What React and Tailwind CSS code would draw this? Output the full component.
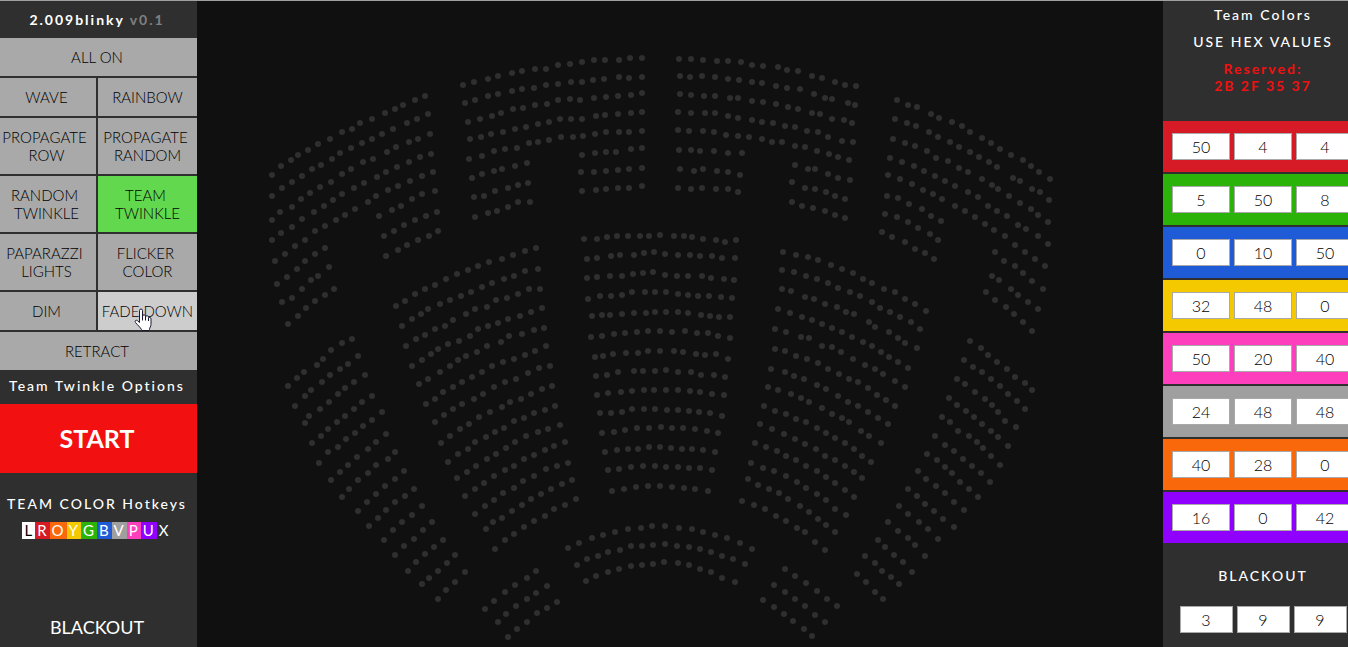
import React from "react";

// Each block of seats has an origin and a number of survey units per map unit.
const BLOCKS = [
  {
    origin: [255, 45],
    units: [3, 3],
    rows: [
      "51,390 78,363 108,345 129,330 159,315 189,297 225,282 261,261 291,252 315,234 351,222 390,204 420,192 444,180 480,165 510,153",
      "51,453 81,429 111,411 141,393 171,372 198,360 231,342 255,324 288,309 321,294 351,282 381,267 414,252 456,234 486,222 519,207",
      "51,525 75,501 111,486 138,462 165,444 195,426 228,411 261,387 288,372 324,351 354,342 396,321 423,306 462,291 489,282 525,267",
      "51,585 78,564 111,546 141,522 177,501 207,483 234,465 261,447 297,429 327,414 366,396 393,381 426,366 462,351 495,336 528,327",
      "60,648 90,627 120,603 150,585 180,558 210,543 243,525 270,510 300,492 339,471 363,453 399,435 429,423 465,408 501,393 534,381",
      "66,717 96,696 126,672 150,648 180,627 210,609 372,513 411,495 438,483 471,462 501,447 540,438",
      "81,771 111,759 141,732 168,705 189,693 222,666 387,573 417,558 447,540 480,525 513,513 546,501",
      "99,837 129,813 153,789 180,768 210,750 237,732 393,633 429,615 456,600 489,585 522,573 549,558",
    ],
  },
  {
    origin: [450, 45],
    units: [3, 3],
    rows: [
      "39,120 72,111 114,102 144,93 186,84 216,78 255,72 288,72 324,60 360,57 396,51 432,45 465,45 507,45 540,39 576,39",
      "45,174 75,165 114,153 144,147 186,138 216,132 252,129 288,120 324,117 363,111 396,111 429,105 462,102 507,96 537,99 576,96",
      "54,231 90,222 126,213 153,204 189,192 219,189 255,180 291,177 324,165 360,162 390,165 432,159 468,156 504,153 543,150 576,144",
      "60,282 93,276 123,267 159,261 195,252 228,246 264,237 297,231 330,222 363,222 396,222 438,213 465,210 504,207 543,204 576,201",
      "57,342 96,333 132,318 165,312 201,309 237,294 264,291 297,285 333,276 369,276 399,273 435,267 468,261 507,261 537,261 576,258",
      "66,399 96,387 132,378 156,372 195,363 231,354 396,330 435,324 468,321 498,321 543,312 576,309",
      "72,456 102,453 135,438 174,429 204,420 234,414 393,381 432,381 468,378 504,375 537,372 576,369",
      "75,516 114,504 141,498 174,486 204,471 240,471 396,438 438,435 468,432 504,429 537,429 576,423",
    ],
  },
  {
    origin: [660, 45],
    units: [3, 3],
    rows: [
      "57,42 93,42 129,45 171,48 204,48 243,51 276,60 309,63 354,66 381,75 414,78 456,93 486,99 525,111 555,120 588,123",
      "60,93 90,96 126,93 165,96 204,102 237,105 276,111 306,114 348,123 381,129 420,132 462,147 495,159 516,162 564,174 585,180",
      "60,147 93,150 132,153 165,153 210,159 234,159 276,168 309,171 348,177 384,186 414,192 456,204 480,207 516,222 552,225 576,234",
      "54,201 93,204 135,204 165,204 204,213 234,219 276,225 306,231 339,234 375,243 405,246 441,258 474,261 504,276 546,288 579,291",
      "54,255 87,258 129,258 162,261 198,270 234,273 267,276 306,282 336,291 366,291 405,303 435,306 471,318 507,327 534,336 567,345",
      "57,315 93,315 120,318 162,318 204,324 246,324 405,360 444,372 465,372 504,387 534,399 570,405",
      "60,372 102,378 129,372 171,378 204,381 240,390 396,411 435,429 465,432 498,441 525,453 555,462",
      "54,429 93,432 126,429 168,432 204,432 234,441 396,471 426,483 459,489 495,498 525,510 555,519",
    ],
  },
  {
    origin: [865, 80],
    units: [3, 3],
    rows: [
      "96,60 129,75 156,81 198,102 222,114 261,126 291,138 315,156 351,174 378,189 405,207 438,225 474,240 498,258 522,276 555,297",
      "90,117 126,129 153,138 192,156 219,171 255,186 282,201 315,216 342,231 372,246 396,261 444,294 465,303 501,327 525,336 552,360",
      "84,177 120,189 150,198 186,213 213,234 249,243 282,264 309,276 351,297 381,315 399,327 432,348 465,369 498,387 519,405 549,426",
      "75,234 111,246 147,258 177,273 210,288 240,303 270,318 309,336 339,351 369,378 396,393 426,408 459,435 483,447 519,468 549,492",
      "69,285 105,297 141,312 174,330 204,342 231,357 270,378 300,393 330,411 360,432 387,450 420,468 450,495 480,516 510,537 540,558",
      "66,348 99,354 132,372 171,387 198,408 228,423 390,516 417,543 450,558 474,579 501,603 534,627",
      "60,402 96,411 129,426 159,444 195,462 219,480 381,588 402,600 438,627 459,645 489,666 519,687",
      "51,456 81,471 120,486 150,507 180,519 207,537 363,636 390,660 423,681 447,702 474,726 501,753",
    ],
  },
  {
    origin: [380, 220],
    units: [3, 3],
    rows: [
      "48,258 75,243 105,222 135,207 165,195 198,177 231,162 264,150 294,138 327,126 366,117 399,105 435,93 468,84",
      "66,318 96,297 123,282 144,267 180,252 210,240 243,228 273,216 306,201 336,189 372,177 402,168 435,153 474,147",
      "78,378 108,357 135,345 165,327 195,318 219,300 258,282 285,267 321,261 348,240 381,234 414,222 447,207 480,207",
      "96,438 126,420 153,402 174,387 204,372 237,363 270,348 294,327 324,318 354,309 384,297 420,288 453,276 486,264",
      "117,492 144,477 180,456 210,438 234,420 258,408 291,396 321,378 363,366 387,348 426,342 462,330 492,324",
      "138,552 165,537 189,516 219,501 246,486 276,471 306,456 336,438 369,426 402,417 435,405 465,393 498,378",
      "165,606 192,585 219,567 246,552 282,537 309,522 342,501 375,486 408,477 444,459 477,444 510,438",
      "183,669 210,648 240,627 267,612 297,591 330,576 366,561 390,546 423,537 453,522 486,507 516,498",
      "204,726 234,702 264,687 285,666 318,651 345,636 372,624 402,603 432,594 462,579 495,570 525,558",
      "231,774 261,756 288,738 321,717 348,702 378,684 405,666 438,648 474,636 504,627 540,615",
      "255,828 285,807 312,789 342,768 375,750 402,738 432,717 462,705 495,690 522,678 555,666",
      "285,882 315,858 342,840 369,819 402,804 429,783 462,768 498,747 531,738 564,729",
      "318,927 339,906 366,894 396,873 426,855 453,837 483,822 513,807 546,792 576,780",
      "345,987 375,960 402,942 432,921 462,903 495,888 522,867 555,855 588,837",
    ],
  },
  {
    origin: [570, 220],
    units: [3, 3],
    rows: [
      "42,57 81,57 111,51 141,48 174,48 210,48 237,48 270,45 312,48 342,48 366,51 399,57 438,60 465,66 498,60",
      "51,117 81,114 123,108 150,105 192,105 222,99 252,96 285,102 324,105 360,105 390,108 426,108 456,114 495,114",
      "51,174 81,171 120,168 156,168 189,162 219,159 249,156 285,165 321,168 354,168 396,168 423,174 462,177 492,180",
      "54,237 90,228 123,228 156,225 186,216 225,216 255,216 288,216 324,222 354,225 384,228 417,228 453,231 486,234",
      "66,288 96,285 120,285 156,282 192,279 228,279 255,276 288,276 324,276 354,279 393,285 420,288 447,291 480,291",
      "63,351 96,348 132,342 165,339 201,336 234,333 270,333 306,336 345,333 381,339 414,339 444,348 480,354",
      "75,411 99,408 129,402 168,399 204,399 234,393 270,393 312,393 339,396 378,402 405,405 438,402 474,417",
      "78,468 111,465 144,456 192,453 219,453 255,453 288,450 324,456 363,456 393,465 432,465 465,471",
      "81,525 114,519 153,516 186,513 222,510 252,510 288,510 324,510 360,513 390,516 426,522 462,525",
      "90,579 123,579 156,576 186,567 222,567 255,567 291,570 324,570 357,573 387,576 420,579 456,588",
      "96,639 132,636 165,630 201,624 237,624 273,621 306,624 339,624 375,627 411,633 444,639",
      "105,696 141,690 174,687 204,687 237,681 270,681 303,684 336,687 366,687 399,690 435,696",
      "114,750 147,747 183,741 219,738 255,738 288,741 324,741 357,744 390,744 426,750",
      "126,813 162,807 198,801 234,798 270,798 306,801 342,804 375,807 414,813",
    ],
  },
  {
    origin: [735, 220],
    units: [3, 3],
    rows: [
      "144,96 183,105 219,111 249,120 288,135 321,147 354,159 384,177 411,189 447,207 480,216 510,237 540,252 573,273",
      "141,150 177,156 213,168 246,177 279,189 309,204 345,216 375,228 411,246 435,264 465,276 495,291 528,306 555,327",
      "141,207 168,213 210,231 237,237 270,252 306,261 333,276 357,282 402,306 420,321 462,336 489,354 510,369 546,384",
      "129,267 165,279 201,291 231,300 261,312 291,324 321,336 351,351 384,366 411,378 438,396 462,411 489,426 519,444",
      "120,327 153,336 198,351 222,354 261,378 291,381 318,396 354,417 390,435 420,447 444,462 480,483 510,501",
      "120,387 150,393 183,408 216,417 249,429 279,447 312,462 342,477 369,486 399,504 426,525 453,540 480,558",
      "108,447 150,456 177,468 207,477 246,495 273,507 309,528 339,546 369,558 399,576 429,594 459,612",
      "99,501 129,510 168,522 198,534 222,546 261,564 291,582 321,594 342,606 378,633 402,648 438,669",
      "87,558 120,573 153,582 183,597 213,606 246,624 273,639 300,654 330,669 357,687 381,708 408,726",
      "75,612 111,627 147,642 180,657 210,672 243,687 270,708 300,720 330,738 357,756 381,774",
      "60,669 93,681 126,693 153,708 183,720 213,738 246,753 273,771 300,789 330,810 357,831",
      "48,729 84,744 117,753 153,768 186,786 213,804 246,822 273,840 300,867 333,885",
      "39,777 69,795 102,807 132,819 159,837 195,858 222,876 249,897 273,915 300,936",
      "21,843 57,855 90,867 123,888 153,903 186,924 210,936 240,966 270,990",
    ],
  },
  {
    origin: [270, 325],
    units: [1.96, 3],
    rows: [
      "35,183 53,159 67,141 92,120 104,102 119,75 141,54 161,42",
      "49,243 68,213 80,195 102,171 117,150 137,132 153,117 173,93",
      "68,294 76,273 98,252 116,231 133,207 147,189 165,171 186,150",
      "82,354 100,333 114,312 131,291 147,273 165,252 180,231 200,213",
      "96,414 114,381 133,366 149,342 167,324 182,303 200,285 219,261",
      "119,465 137,441 153,420 170,396 192,372 208,351 227,327",
      "141,516 155,492 173,465 192,444 208,420 231,402 245,381",
      "173,558 190,531 208,507 225,483 245,462 263,438",
      "194,603 212,579 227,555 245,531 265,513 282,492",
      "223,645 241,615 259,591 278,570 298,543",
      "245,690 263,663 282,642 300,615 317,591",
      "270,738 286,711 304,687 321,666 339,645",
      "298,777 312,759 329,738 347,714 363,690",
      "329,822 345,796 363,771 382,741",
      "421,852 439,828 461,801 480,780 504,759 521,738",
      "447,891 463,867 482,843 504,822 521,804 543,783",
      "466,936 484,912 504,891 523,864 543,849 562,831",
      "584,669 606,654 631,639 653,630 676,621 702,612 727,609 749,603 774,603 802,609 827,612 849,621 872,630 896,639 921,654 945,672",
      "602,720 621,702 643,693 663,681 686,675 708,663 729,663 751,660 774,657 798,663 821,666 843,672 864,681 886,693 908,702 931,717",
      "619,768 639,753 663,741 684,732 708,723 729,720 751,717 772,711 800,714 821,720 843,732 864,741 886,759 911,771",
      "1009,732 1029,753 1050,774 1072,798 1092,822 1111,843",
      "988,780 1009,801 1029,822 1048,843 1068,870 1088,891",
      "966,825 988,846 1007,867 1025,888 1047,912 1062,933",
      "1372,48 1393,69 1407,90 1425,111 1444,132 1460,156 1480,174 1493,195",
      "1360,105 1378,126 1395,141 1413,162 1431,183 1446,207 1464,228 1480,252",
      "1346,162 1362,177 1382,201 1401,222 1415,240 1427,261 1441,288 1462,306",
      "1331,219 1346,240 1364,258 1380,276 1395,297 1413,318 1427,336 1446,363",
      "1317,276 1333,291 1348,318 1370,333 1386,351 1397,369 1413,393 1431,420",
      "1303,333 1323,360 1341,378 1358,402 1376,423 1393,444 1411,471",
      "1288,387 1307,405 1323,426 1337,444 1352,471 1370,492 1388,516",
      "1270,438 1286,462 1305,483 1323,504 1341,531 1360,555",
      "1250,492 1268,513 1284,537 1301,558 1319,582 1341,606",
      "1233,543 1250,567 1272,591 1290,612 1309,642",
      "1211,591 1231,618 1250,639 1264,660 1284,693",
      "1192,645 1205,666 1223,690 1241,711 1258,741",
      "1166,693 1186,714 1199,738 1217,756 1233,777",
      "1150,747 1168,771 1186,801 1201,822",
    ],
  },
];

const SEATS = BLOCKS.flatMap(({ origin, units, rows }) =>
  rows.flatMap((row) =>
    row.split(" ").map((pair) => {
      const [x, y] = pair.split(",").map(Number);
      return [
        Math.round(origin[0] + x / units[0]),
        Math.round(origin[1] + y / units[1]),
      ];
    })
  )
);

const MODES = [
  { lines: ["ALL ON"], wide: true },
  { lines: ["WAVE"] },
  { lines: ["RAINBOW"] },
  { lines: ["PROPAGATE", "ROW"] },
  { lines: ["PROPAGATE", "RANDOM"] },
  { lines: ["RANDOM", "TWINKLE"] },
  { lines: ["TEAM", "TWINKLE"], active: true },
  { lines: ["PAPARAZZI", "LIGHTS"] },
  { lines: ["FLICKER", "COLOR"] },
  { lines: ["DIM"] },
  { lines: ["FADE DOWN"], hovered: true },
  { lines: ["RETRACT"], wide: true },
];

const HOTKEYS = [
  ["L", "bg-white text-black"],
  ["R", "bg-[#d61b26]"],
  ["O", "bg-[#f9690b]"],
  ["Y", "bg-[#f5c900]"],
  ["G", "bg-[#2bb30a]"],
  ["B", "bg-[#1f5bd6]"],
  ["V", "bg-[#9f9f9f]"],
  ["P", "bg-[#fd3fbd]"],
  ["U", "bg-[#9000ff]"],
  ["X", ""],
];

const TEAMS = [
  ["Red", "bg-[#d61b26]", [50, 4, 4]],
  ["Green", "bg-[#2bb30a]", [5, 50, 8]],
  ["Blue", "bg-[#1f5bd6]", [0, 10, 50]],
  ["Yellow", "bg-[#f5c900]", [32, 48, 0]],
  ["Pink", "bg-[#fd3fbd]", [50, 20, 40]],
  ["Silver", "bg-[#9f9f9f]", [24, 48, 48]],
  ["Orange", "bg-[#f9690b]", [40, 28, 0]],
  ["Purple", "bg-[#9000ff]", [16, 0, 42]],
];

const CHANNELS = ["red", "green", "blue"];

function HandCursor() {
  return (
    <svg
      className="pointer-events-none absolute top-4 left-9 h-6 w-[18px]"
      viewBox="0 0 18 24"
      aria-hidden="true"
    >
      <path
        d="M5.5 14.5V2.5a1.5 1.5 0 0 1 3 0V8.200a1.500 1.500 0 0 1 3 .3V9a1.500 1.500 0 0 1 3 .5v.5a1.400 1.400 0 0 1 2.500 1V16.500c0 2-1.500 3-1.500 5V22.500H7.500V21.500C6 19 3.500 17 1.500 14.500C.5 13 1.800 11.500 3.500 12.700Z"
        fill="#fff"
        stroke="#1a1a33"
        strokeLinejoin="round"
      />
      <path d="M8.500 8V12.500M11.500 9V12.500M14.500 10V13" stroke="#1a1a33" fill="none" />
    </svg>
  );
}

function ModeButton({ lines, wide, active, hovered }) {
  const tone = active ? "bg-[#62d84e]" : hovered ? "bg-[#cdcdcd]" : "bg-[#a9a9a9]";
  return (
    <button
      className={`relative py-2.5 text-center text-[15px] leading-[18px] font-light whitespace-nowrap text-black ${tone} ${wide ? "col-span-2" : ""}`}
    >
      {lines.map((line, i) => (
        <React.Fragment key={i}>
          {line}
          {i < lines.length - 1 && <>&nbsp;<br /></>}
        </React.Fragment>
      ))}
      {hovered && <HandCursor />}
    </button>
  );
}

function ChannelInputs({ name, values, width }) {
  return (
    <div className="flex justify-center gap-1">
      {values.map((v, i) => (
        <input
          key={i}
          type="text"
          aria-label={`${name} ${CHANNELS[i]}`}
          defaultValue={v}
          className={`h-[27px] border border-[#a9a9a9] bg-white text-center text-base font-light text-black ${width}`}
        />
      ))}
    </div>
  );
}

export default function App() {
  return (
    <div className="flex h-screen overflow-hidden border-t border-[#a0a0a0] bg-[#101010] font-['Lato',sans-serif] text-white">
      <aside className="-ml-[3px] flex w-[200px] shrink-0 flex-col bg-[#2f2f2f] text-center">
        <h1 className="py-2.5 text-sm leading-[17px] font-bold tracking-[2px]">
          2.009blinky <span className="text-[#808080]">v0.1</span>
        </h1>
        <div className="grid grid-cols-2 gap-0.5">
          {MODES.map((m) => (
            <ModeButton key={m.lines.join(" ")} {...m} />
          ))}
        </div>
        <h2 className="pt-[7px] pb-2.5 text-sm leading-[17px] font-medium tracking-[2px] whitespace-nowrap">
          Team Twinkle Options
        </h2>
        <button className="bg-[#f21010] py-5 text-[25px] leading-[29px] font-bold">START</button>
        <h2 className="mt-[22px] text-sm leading-[17px] font-medium tracking-[2px] whitespace-nowrap">
          TEAM COLOR Hotkeys
        </h2>
        <div className="mt-2.5 flex justify-center text-[15px] leading-[17px] tracking-[2px]">
          {HOTKEYS.map(([key, tone]) => (
            <span key={key} className={`pr-px pl-0.5 ${tone}`}>
              {key}
            </span>
          ))}
        </div>
        <button className="mt-auto h-[39px] text-lg leading-[39px]">BLACKOUT</button>
      </aside>

      <main className="min-w-0 flex-1">
        <svg className="h-full w-full" viewBox="197 1 966 646" role="img" aria-label="Seating map">
          {SEATS.map(([x, y], i) => (
            <circle key={i} cx={x} cy={y} r="3" fill="#2f2f2f" />
          ))}
        </svg>
      </main>

      <aside className="-mr-[15px] w-[200px] shrink-0 bg-[#2f2f2f] text-center text-sm leading-[17px] tracking-[2px]">
        <div className="flex flex-col gap-2.5 pt-[5px] pb-[27px]">
          <h2 className="font-medium">Team Colors</h2>
          <p className="font-medium">USE HEX VALUES</p>
          <p className="font-bold text-[#f21010]">
            Reserved:
            <br />
            2B 2F 35 37
          </p>
        </div>
        <div className="flex flex-col gap-0.5 tracking-normal">
          {TEAMS.map(([name, tone, values]) => (
            <div key={name} className={`py-3 ${tone}`}>
              <ChannelInputs name={name} values={values} width="w-[58px]" />
            </div>
          ))}
        </div>
        <h2 className="mt-6 mb-[22px] font-medium">BLACKOUT</h2>
        <div className="tracking-normal">
          <ChannelInputs name="Blackout" values={[3, 9, 9]} width="w-[53px]" />
        </div>
      </aside>
    </div>
  );
}
